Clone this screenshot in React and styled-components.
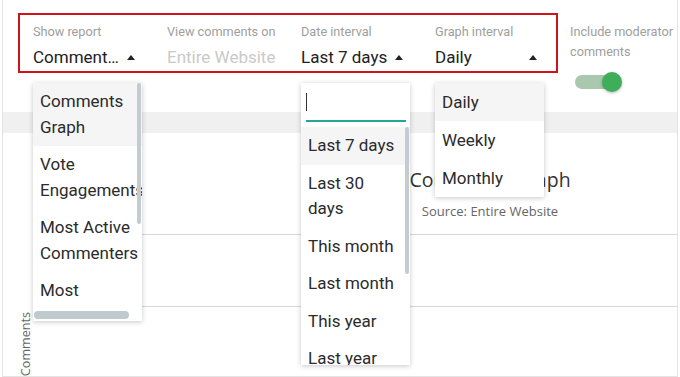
import React from 'react'
import styled, { createGlobalStyle } from 'styled-components'

const GlobalStyle = createGlobalStyle`
  html, body {
    margin: 0;
    padding: 0;
    background: #fff;
  }
  body {
    font-family: Roboto, "Liberation Sans", Arial, sans-serif;
  }
`

const Frame = styled.div`
  width: 676px;
  height: 377px;
  margin-left: 2px;
  box-sizing: border-box;
  border: 1px solid #e4e4e4;
  border-top: none;
  display: flex;
  flex-direction: column;
  overflow: hidden;
`

const FilterBar = styled.div`
  flex-shrink: 0;
  height: 112px;
  box-sizing: border-box;
  padding: 13px 0 0 15px;
  display: flex;
  align-items: flex-start;
`

const Highlight = styled.div`
  display: flex;
  gap: 25px;
  border: 2px solid #d0121b;
  padding: 9px 12px 3px 13px;
`

const Field = styled.div`
  position: relative;
  width: 109px;
  display: flex;
  flex-direction: column;
`

const Label = styled.div`
  font-size: 12.7px;
  line-height: ${({ $lh }) => $lh || '16px'};
  color: #9e9e9e;
  white-space: ${({ $wrap }) => ($wrap ? 'normal' : 'nowrap')};
`

const ValueRow = styled.div`
  margin-top: 6px;
  height: 22px;
  display: flex;
  align-items: center;
  justify-content: space-between;
  padding-right: 7px;
`

const ValueText = styled.span`
  font-size: 17px;
  line-height: 22px;
  color: ${({ $disabled }) => ($disabled ? '#c9c9c9' : '#212121')};
  max-width: ${({ $disabled }) => ($disabled ? 'none' : '87px')};
  overflow: ${({ $disabled }) => ($disabled ? 'visible' : 'hidden')};
  text-overflow: ellipsis;
  white-space: nowrap;
`

const Caret = styled.span`
  width: 0;
  height: 0;
  border-left: 4px solid transparent;
  border-right: 4px solid transparent;
  border-bottom: 5px solid #222;
`

const ToggleField = styled.div`
  margin: 9px 0 0 12px;
  width: 106px;
`

const Toggle = styled.div`
  position: relative;
  margin-top: 10px;
  width: 48px;
  height: 20px;
`

const Track = styled.div`
  position: absolute;
  left: 5px;
  top: 3px;
  width: 38px;
  height: 14px;
  border-radius: 7px;
  background: #a9c8ae;
`

const Knob = styled.div`
  position: absolute;
  left: 32px;
  top: 0;
  width: 20px;
  height: 20px;
  border-radius: 50%;
  background: #3fae5b;
  box-shadow: 0 1px 3px rgba(0, 0, 0, 0.3);
`

const Band = styled.div`
  flex-shrink: 0;
  height: 21px;
  background: #f0f0f0;
`

const Chart = styled.div`
  flex: 1;
  min-height: 0;
  display: flex;
  flex-direction: column;
  font-family: "Open Sans", "DejaVu Sans", sans-serif;
`

const ChartHead = styled.div`
  flex-shrink: 0;
  padding: 33px 0 0 300px;
  text-align: center;
`

const ChartTitle = styled.div`
  font-size: 19.5px;
  line-height: 27px;
  height: 27px;
  color: #333;
`

const ChartSource = styled.div`
  margin-top: 9px;
  font-size: 13px;
  line-height: 18px;
  height: 18px;
  color: #666;
`

const Plot = styled.div`
  flex: 1;
  min-height: 0;
  margin-top: 14px;
  display: grid;
  grid-template-columns: 44px 1fr;
`

const AxisLabel = styled.div`
  writing-mode: vertical-rl;
  transform: rotate(180deg);
  font-size: 12.6px;
  color: #666;
  align-self: end;
  justify-self: center;
  padding-top: 2px;
`

const GridLines = styled.div`
  display: flex;
  flex-direction: column;
`

const GridRow = styled.div`
  flex-shrink: 0;
  height: 71px;
  border-top: 1px solid #d8d8d8;
`

const Menu = styled.div`
  position: absolute;
  top: calc(100% + 15px);
  left: 0;
  width: 109px;
  height: ${({ $h }) => ($h ? `${$h}px` : 'auto')};
  background: #fff;
  box-shadow: 0 1px 5px rgba(0, 0, 0, 0.22);
  overflow: hidden;
  z-index: 10;
`

const MenuList = styled.div`
  width: ${({ $w }) => ($w ? `${$w}px` : 'auto')};
  height: ${({ $h }) => ($h ? `${$h}px` : 'auto')};
  overflow: hidden;
`

const Item = styled.div`
  padding: 6px ${({ $pr }) => $pr || 7}px 6px 7px;
  font-size: 17px;
  line-height: ${({ $lh }) => $lh || 25.5}px;
  color: #2b2b2b;
  background: ${({ $active }) => ($active ? '#f5f5f5' : 'transparent')};
`

const VThumb = styled.div`
  position: absolute;
  right: 1px;
  width: 4px;
  border-radius: 2px;
  background: #c3ccd1;
`

const HThumb = styled.div`
  position: absolute;
  left: 1px;
  bottom: 2px;
  height: 8px;
  border-radius: 4px;
  background: #bfc9ce;
`

const Search = styled.div`
  height: 44px;
  box-sizing: border-box;
  padding: 10px 4px 5px 5px;
`

const SearchLine = styled.div`
  height: 27px;
  border-bottom: 2px solid #26a69a;
`

const TextCursor = styled.span`
  display: block;
  width: 1px;
  height: 18px;
  background: #333;
`

const reports = ['Comments Graph', 'Vote Engagements', 'Most Active Commenters', 'Most Commented Posts']
const dates = ['Last 7 days', 'Last 30 days', 'This month', 'Last month', 'This year', 'Last year', 'All time']
const intervals = ['Daily', 'Weekly', 'Monthly']

export default function App() {
  return (
    <>
      <GlobalStyle />
      <Frame>
        <FilterBar>
          <Highlight>
            <Field>
              <Label>Show report</Label>
              <ValueRow>
                <ValueText>Comments Graph</ValueText>
                <Caret />
              </ValueRow>
              <Menu $h={238}>
                <MenuList $w={130} $h={225}>
                  {reports.map((r, i) => (
                    <Item key={r} $active={i === 0}>{r}</Item>
                  ))}
                </MenuList>
                <VThumb style={{ top: 0, height: 141 }} />
                <HThumb style={{ width: 95 }} />
              </Menu>
            </Field>
            <Field>
              <Label>View comments on</Label>
              <ValueRow>
                <ValueText $disabled>Entire Website</ValueText>
              </ValueRow>
            </Field>
            <Field>
              <Label>Date interval</Label>
              <ValueRow>
                <ValueText>Last 7 days</ValueText>
                <Caret />
              </ValueRow>
              <Menu $h={282}>
                <Search>
                  <SearchLine>
                    <TextCursor />
                  </SearchLine>
                </Search>
                {dates.map((d, i) => (
                  <Item key={d} $active={i === 0} $pr={14}>{d}</Item>
                ))}
                <VThumb style={{ top: 44, height: 147 }} />
              </Menu>
            </Field>
            <Field>
              <Label>Graph interval</Label>
              <ValueRow>
                <ValueText>Daily</ValueText>
                <Caret />
              </ValueRow>
              <Menu>
                {intervals.map((g, i) => (
                  <Item key={g} $active={i === 0} $lh={26}>{g}</Item>
                ))}
              </Menu>
            </Field>
          </Highlight>
          <ToggleField>
            <Label $lh="20px" $wrap>Include moderator comments</Label>
            <Toggle>
              <Track />
              <Knob />
            </Toggle>
          </ToggleField>
        </FilterBar>
        <Band />
        <Chart>
          <ChartHead>
            <ChartTitle>Comments Graph</ChartTitle>
            <ChartSource>Source: Entire Website</ChartSource>
          </ChartHead>
          <Plot>
            <AxisLabel>Comments</AxisLabel>
            <GridLines>
              <GridRow />
              <GridRow />
            </GridLines>
          </Plot>
        </Chart>
      </Frame>
    </>
  )
}
